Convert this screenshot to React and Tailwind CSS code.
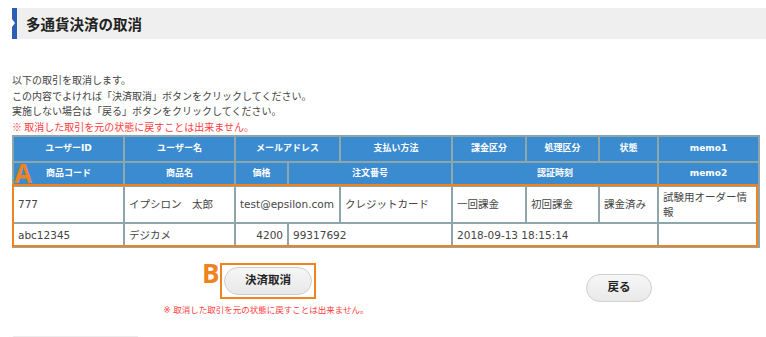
const JP = { fontFamily: '"DejaVu Sans", "Noto Sans CJK JP", sans-serif' };

const HEAD1 = [
  { label: 'ユーザーID' },
  { label: 'ユーザー名' },
  { label: 'メールアドレス', span: 2 },
  { label: '支払い方法' },
  { label: '課金区分' },
  { label: '処理区分' },
  { label: '状態' },
  { label: 'memo1' },
];

const HEAD2 = [
  { label: '商品コード' },
  { label: '商品名' },
  { label: '価格' },
  { label: '注文番号', span: 2 },
  { label: '認証時刻', span: 3 },
  { label: 'memo2' },
];

const ROW1 = [
  { v: '777' },
  { v: 'イプシロン　太郎' },
  { v: 'test@epsilon.com', span: 2 },
  { v: 'クレジットカード' },
  { v: '一回課金' },
  { v: '初回課金' },
  { v: '課金済み' },
  { v: '試験用オーダー情報' },
];

const ROW2 = [
  { v: 'abc12345' },
  { v: 'デジカメ' },
  { v: '4200', right: true },
  { v: '99317692', span: 2 },
  { v: '2018-09-13 18:15:14', span: 3 },
  { v: '' },
];

const COLS = [111, 111, 53, 52, 112, 74, 73, 59, 101];

function HeadRow({ cells, h }) {
  return (
    <tr>
      {cells.map((c) => (
        <th
          key={c.label}
          colSpan={c.span || 1}
          className={`border-2 border-[#8ea6a9] bg-[#3b8bd1] text-white text-[9px] font-bold text-center ${h}`}
        >
          {c.label}
        </th>
      ))}
    </tr>
  );
}

function DataRow({ cells, h }) {
  return (
    <tr>
      {cells.map((c, i) => (
        <td
          key={i}
          colSpan={c.span || 1}
          className={`border-2 border-[#8ea6a9] bg-white px-[4px] text-[10.5px] leading-[15px] text-[#444] ${h} ${c.right ? 'text-right' : 'text-left'}`}
        >
          {c.v}
        </td>
      ))}
    </tr>
  );
}

export default function App() {
  return (
    <div className="w-[766px] h-[337px] bg-white overflow-hidden" style={JP}>
      {/* page title */}
      <div className="mt-[8px] ml-[12px] flex h-[31px]">
        <div className="relative w-[5px] bg-[#2c5db4]">
          <span className="absolute left-0 top-[11px] w-0 h-0 border-y-[4px] border-y-transparent border-l-[3px] border-l-white" />
        </div>
        <div className="flex-1 bg-[#efefef] flex items-center pl-[9px]">
          <h1 className="text-[14.5px] font-bold text-[#222]" style={{ fontFamily: '"Noto Sans CJK JP", sans-serif' }}>
            多通貨決済の取消
          </h1>
        </div>
      </div>

      {/* notes */}
      <div className="mt-[33px] ml-[12px] text-[10px] leading-[15.5px] text-[#444]" style={{ fontFamily: '"Noto Sans CJK JP", sans-serif' }}>
        <p>以下の取引を取消します。</p>
        <p>この内容でよければ「決済取消」ボタンをクリックしてください。</p>
        <p>実施しない場合は「戻る」ボタンをクリックしてください。</p>
        <p className="text-[#ff3b3b]">※ 取消した取引を元の状態に戻すことは出来ません。</p>
      </div>

      {/* result table */}
      <div className="relative ml-[12px] mt-px w-[746px]">
        <table className="w-[746px] table-fixed border-collapse">
          <colgroup>
            {COLS.map((w, i) => (
              <col key={i} style={{ width: w }} />
            ))}
          </colgroup>
          <thead>
            <HeadRow cells={HEAD1} h="h-[26px]" />
            <HeadRow cells={HEAD2} h="h-[24px]" />
          </thead>
          <tbody>
            <DataRow cells={ROW1} h="h-[37px]" />
            <DataRow cells={ROW2} h="h-[24px]" />
          </tbody>
        </table>
        {/* annotation A */}
        <span
          className="absolute left-[2px] top-[25px] text-[26px] leading-none font-bold text-[#f0831e]"
          style={{ fontFamily: '"Open Sans", sans-serif' }}
        >
          A
        </span>
        <div className="pointer-events-none absolute left-0 right-0 top-[49px] h-[63px] border-2 border-[#f0831e]" />
      </div>

      {/* actions */}
      <div className="mt-[15px] flex">
        <div className="w-[520px] pl-[12px] flex flex-col items-center">
          <div className="relative ml-[4px] border-2 border-[#f0831e] p-[2px]">
            <span
              className="absolute left-[-20px] top-[-5px] text-[26px] leading-none font-bold text-[#f0831e]"
              style={{ fontFamily: '"Open Sans", sans-serif' }}
            >
              B
            </span>
            <button className="w-[88px] h-[28px] rounded-full border border-[#cfcfcf] bg-gradient-to-b from-[#f6f6f6] to-[#e9e9e9] text-[11.5px] font-bold text-[#222]">
              決済取消
            </button>
          </div>
          <p className="mt-[5px] text-[8.5px] leading-[12px] text-[#ff3b3b]">※ 取消した取引を元の状態に戻すことは出来ません。</p>
        </div>
        <div className="ml-[66px] mt-[11px]">
          <button className="w-[66px] h-[28px] rounded-full border border-[#cfcfcf] bg-gradient-to-b from-[#f6f6f6] to-[#e9e9e9] text-[11.5px] font-bold text-[#222]">
            戻る
          </button>
        </div>
      </div>

      <div className="mt-[20px] ml-[13px] w-[125px] h-px bg-[#ececec]" />
    </div>
  );
}
